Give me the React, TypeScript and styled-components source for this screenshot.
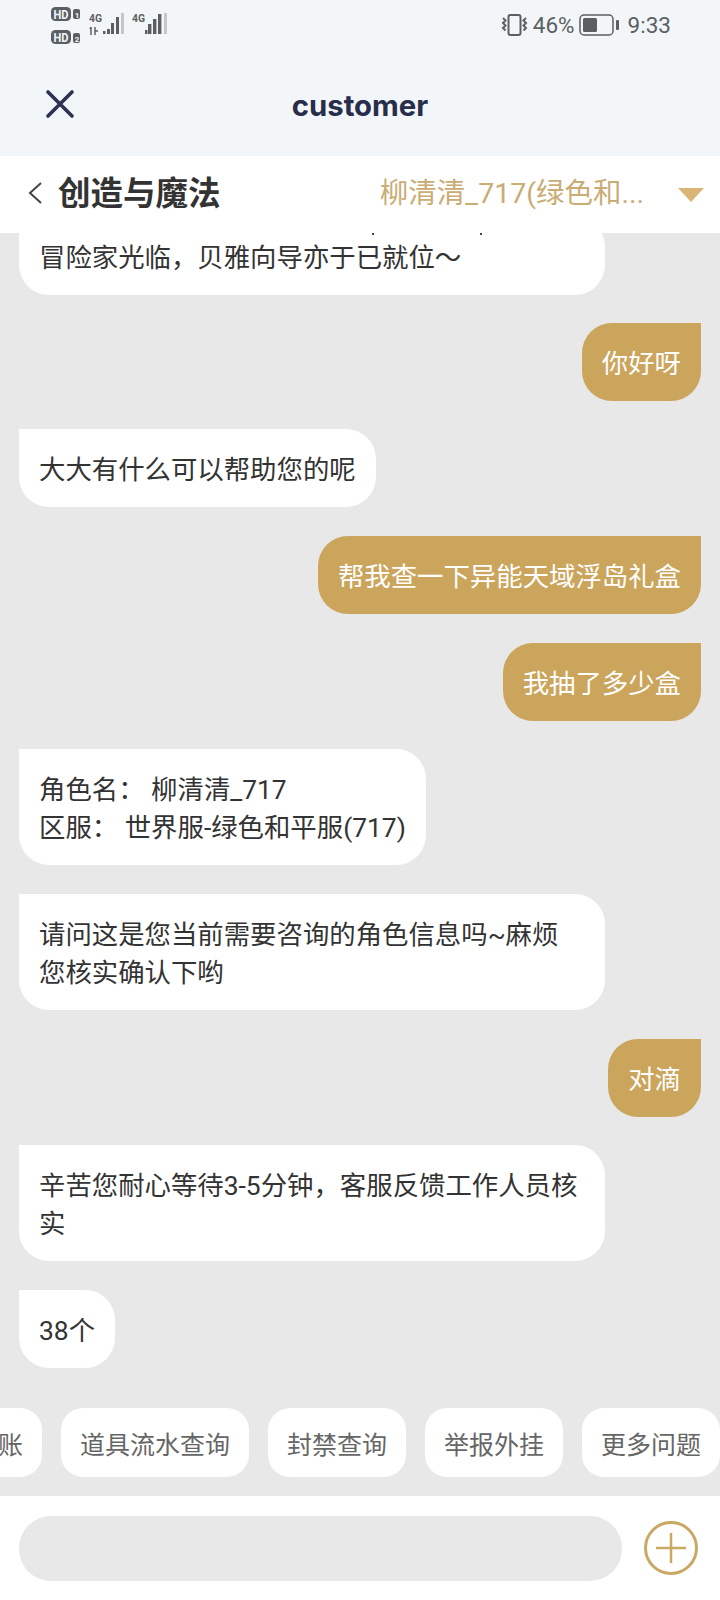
import React from "react";
import styled, { createGlobalStyle } from "styled-components";

const Global = createGlobalStyle`
  html, body { margin: 0; padding: 0; background: #e8e8e8; }
  * { box-sizing: border-box; }
  body { font-family: "Roboto", "Noto Sans CJK SC", sans-serif; }
`;

const Page = styled.div`
  width: 720px;
  height: 1600px;
  display: flex;
  flex-direction: column;
  overflow: hidden;
`;

const TopArea = styled.div`
  height: 156px;
  background: #f2f6f9;
  display: flex;
  flex-direction: column;
`;

const StatusBar = styled.div`
  height: 50px;
  display: flex;
  align-items: flex-start;
  justify-content: space-between;
  padding: 5px 49px 0 49px;
`;

const StatusRight = styled.div`
  display: flex;
  align-items: center;
  gap: 4px;
  height: 36px;
  padding-top: 3px;
  color: #5c5f61;
  font-size: 22.5px;
  font-family: "Roboto", sans-serif;
`;

const Clock = styled.span`
  margin-left: 4px;
`;

const NavBar = styled.div`
  flex: 1;
  display: flex;
  align-items: center;
  justify-content: center;
  position: relative;
  padding-top: 5px;
`;

const CloseButton = styled.div`
  position: absolute;
  left: 44px;
  top: 38px;
  width: 32px;
  height: 32px;
  color: #2c3252;
`;

const NavTitle = styled.div`
  font-family: "Inter", "Roboto", sans-serif;
  font-weight: 700;
  font-size: 29.3px;
  color: #272d4a;
`;

const GameBar = styled.div`
  height: 77px;
  background: #fff;
  display: flex;
  align-items: center;
  padding: 0 16px 8px 27px;
  z-index: 1;
`;

const BackIcon = styled.svg`
  margin-top: 4px;
  flex-shrink: 0;
`;

const GameTitle = styled.div`
  margin-left: 15px;
  font-size: 32.5px;
  font-weight: 700;
  color: #333;
  flex: 1;
`;

const RoleName = styled.div`
  font-size: 28.5px;
  color: #c9ad74;
  margin-right: 34px;
`;

const Caret = styled.div`
  width: 0;
  height: 0;
  border-left: 13px solid transparent;
  border-right: 13px solid transparent;
  border-top: 14px solid #d9b678;
  margin-top: 8px;
`;

const Chat = styled.div`
  flex: 1;
  min-height: 0;
  background: #e8e8e8;
  display: flex;
  flex-direction: column;
  justify-content: flex-end;
  gap: 28.7px;
  padding: 0 19px 40px;
  overflow: hidden;
`;

const Bubble = styled.div<{ $mine?: boolean; $wide?: boolean }>`
  align-self: ${(p) => (p.$mine ? "flex-end" : "flex-start")};
  flex-shrink: 0;
  max-width: 586px;
  width: ${(p) => (p.$wide ? "586px" : "auto")};
  padding: 22px 20px 18px;
  font-size: 26.4px;
  line-height: 38px;
  color: ${(p) => (p.$mine ? "#fff" : "#333")};
  background: ${(p) => (p.$mine ? "#cba55c" : "#fff")};
  border-radius: ${(p) => (p.$mine ? "30px 0 30px 30px" : "0 30px 30px 30px")};
  white-space: pre-wrap;
`;

const ClippedBubble = styled(Bubble)`
  position: relative;
  margin-bottom: -1px;

  &::before {
    content: "";
    position: absolute;
    left: 353px;
    bottom: 60px;
    width: 2px;
    height: 2px;
    background: #444;
    box-shadow: 108px 0 0 #444;
  }
`;

const ChipRow = styled.div`
  height: 88px;
  background: #e8e8e8;
  display: flex;
  justify-content: flex-end;
  gap: 19px;
  overflow: hidden;
  flex-shrink: 0;
`;

const Chip = styled.div`
  flex-shrink: 0;
  height: 69px;
  padding: 0 19px;
  display: flex;
  align-items: center;
  background: #fff;
  border-radius: 22px;
  font-size: 25px;
  color: #666;
`;

const InputBar = styled.div`
  height: 104px;
  background: #fff;
  display: flex;
  align-items: flex-start;
  padding: 20px 22px 0 19px;
  gap: 22px;
`;

const InputField = styled.div`
  flex: 1;
  height: 65px;
  border-radius: 32px;
  background: #e8e8e8;
`;

const PlusButton = styled.div`
  width: 54px;
  height: 54px;
  margin-top: 5px;
`;

const chips = ["充值到账", "道具流水查询", "封禁查询", "举报外挂", "更多问题"];

export default function App() {
  return (
    <Page>
      <Global />
      <TopArea>
        <StatusBar>
          <svg width="122" height="42" viewBox="0 0 122 42" fill="none">
            <rect x="2" y="2" width="20" height="14" rx="4.5" fill="#5c5f61" />
            <text x="4.5" y="13.5" fontSize="12" fontWeight="700" fill="#f2f6f9" fontFamily="Roboto" textLength="15" lengthAdjust="spacingAndGlyphs">HD</text>
            <rect x="24" y="4" width="7" height="10" rx="2" fill="#5c5f61" />
            <text x="25.8" y="12.5" fontSize="8" fontWeight="700" fill="#f2f6f9" fontFamily="Roboto">1</text>
            <rect x="2" y="25" width="20" height="14" rx="4.5" fill="#5c5f61" />
            <text x="4.5" y="36.5" fontSize="12" fontWeight="700" fill="#f2f6f9" fontFamily="Roboto" textLength="15" lengthAdjust="spacingAndGlyphs">HD</text>
            <rect x="24" y="28" width="7" height="10" rx="2" fill="#5c5f61" />
            <text x="25.8" y="36.5" fontSize="8" fontWeight="700" fill="#f2f6f9" fontFamily="Roboto">2</text>

            <text x="40" y="17" fontSize="11" fontWeight="700" fill="#5c5f61" fontFamily="Roboto" textLength="13" lengthAdjust="spacingAndGlyphs">4G</text>
            <path d="M42 22v8M41 24l1-2M46 22v8M46 26l3 0" stroke="#5c5f61" strokeWidth="1.5" />
            <rect x="54" y="26" width="2.5" height="3" fill="#5c5f61" />
            <rect x="58" y="24" width="3" height="5" fill="#5c5f61" />
            <rect x="62" y="18" width="3" height="11" fill="#5c5f61" />
            <rect x="67" y="12" width="3" height="17" fill="#5c5f61" />
            <rect x="72" y="8" width="3" height="21" fill="#c4c7c9" />

            <text x="83" y="17" fontSize="11" fontWeight="700" fill="#5c5f61" fontFamily="Roboto" textLength="13" lengthAdjust="spacingAndGlyphs">4G</text>
            <rect x="96" y="25" width="2.5" height="4" fill="#5c5f61" />
            <rect x="99" y="19" width="3.4" height="10" fill="#5c5f61" />
            <rect x="104" y="14" width="3.4" height="15" fill="#5c5f61" />
            <rect x="109" y="9" width="3.4" height="20" fill="#5c5f61" />
            <rect x="115" y="8" width="3" height="21" fill="#c4c7c9" />
          </svg>
          <StatusRight>
            <svg width="29" height="24" viewBox="0 0 29 24" fill="none" stroke="#5c5f61">
              <rect x="8.5" y="2" width="12" height="20" rx="2" strokeWidth="2" />
              <path d="M3 5l2.5 2.5-2.5 2.5 2.5 2.5-2.5 2.5 2.5 2.5M26 5l-2.5 2.5 2.5 2.5-2.5 2.5 2.5 2.5-2.5 2.5" strokeWidth="2" />
            </svg>
            <span>46%</span>
            <svg width="41" height="22" viewBox="0 0 41 22" fill="none">
              <rect x="1" y="1" width="33" height="20" rx="4" stroke="#5c5f61" strokeWidth="1.5" />
              <rect x="4" y="4" width="14" height="14" rx="1.5" fill="#5c5f61" />
              <rect x="37" y="6" width="3" height="10" rx="1" fill="#5c5f61" />
            </svg>
            <Clock>9:33</Clock>
          </StatusRight>
        </StatusBar>
        <NavBar>
          <CloseButton>
            <svg width="32" height="32" viewBox="0 0 32 32" fill="none" stroke="currentColor" strokeWidth="3.6" strokeLinecap="round">
              <path d="M4 4l24 24M28 4L4 28" />
            </svg>
          </CloseButton>
          <NavTitle>customer</NavTitle>
        </NavBar>
      </TopArea>
      <GameBar>
        <BackIcon width="16" height="22" viewBox="0 0 16 22" fill="none" stroke="#444" strokeWidth="2">
          <path d="M14 1L3 11l11 10" />
        </BackIcon>
        <GameTitle>创造与魔法</GameTitle>
        <RoleName>柳清清_717(绿色和...</RoleName>
        <Caret />
      </GameBar>
      <Chat>
        <ClippedBubble $wide>冒险家光临，贝雅向导亦于已就位～</ClippedBubble>
        <Bubble $mine>你好呀</Bubble>
        <Bubble>大大有什么可以帮助您的呢</Bubble>
        <Bubble $mine>帮我查一下异能天域浮岛礼盒</Bubble>
        <Bubble $mine>我抽了多少盒</Bubble>
        <Bubble>{"角色名： 柳清清_717\n区服： 世界服-绿色和平服(717)"}</Bubble>
        <Bubble $wide>{"请问这是您当前需要咨询的角色信息吗~麻烦\n您核实确认下哟"}</Bubble>
        <Bubble $mine>对滴</Bubble>
        <Bubble $wide>{"辛苦您耐心等待3-5分钟，客服反馈工作人员核\n实"}</Bubble>
        <Bubble>38个</Bubble>
      </Chat>
      <ChipRow>
        {chips.map((c) => (
          <Chip key={c}>{c}</Chip>
        ))}
      </ChipRow>
      <InputBar>
        <InputField />
        <PlusButton>
          <svg width="54" height="54" viewBox="0 0 54 54" fill="none" stroke="#c9a863">
            <circle cx="27" cy="27" r="25.5" strokeWidth="3" />
            <path d="M12 27h30M27 12v30" strokeWidth="2.5" />
          </svg>
        </PlusButton>
      </InputBar>
    </Page>
  );
}
